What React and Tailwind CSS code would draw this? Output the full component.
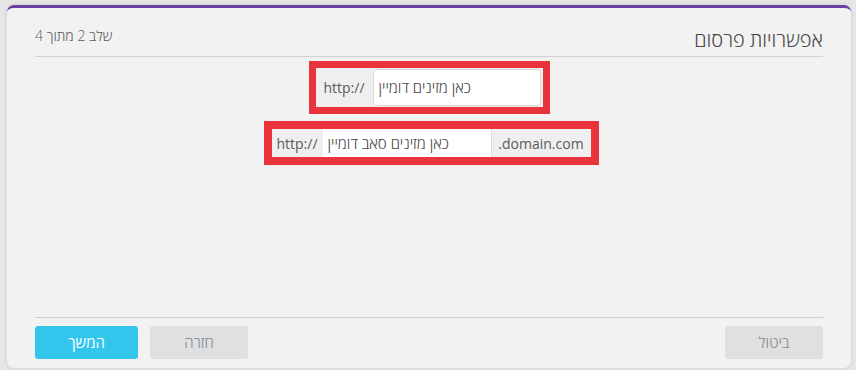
import React from "react";

export default function App() {
  return (
    <div
      dir="rtl"
      className="w-[856px] h-[370px] bg-[#e6e6e6] pt-[5px] pl-[7px] pr-[5px] pb-[2px] overflow-hidden"
      style={{ fontFamily: '"Open Sans", "Noto Sans", "Liberation Sans", sans-serif' }}
    >
      <div className="h-full flex flex-col rounded-[7px] bg-[#f2f2f2] border-t-[3px] border-[#6a3ea2] shadow-[0_0_4px_rgba(0,0,0,0.12)] px-[28px] pb-[9px]">
        {/* header */}
        <div className="flex items-start justify-between pt-[18px] pb-[2px] border-b border-[#d3d3d3]">
          <div className="text-[20px] leading-[28px] font-light text-[#4a4a4a]">אפשרויות פרסום</div>
          <div className="text-[14px] leading-[20px] font-light text-[#5a5a5a]">שלב 2 מתוך 4</div>
        </div>

        {/* body */}
        <div className="flex-1 flex flex-col items-center pt-[4px]">
          <div dir="ltr" className="flex items-center border-[7px] border-[#e8343a] bg-[#efefef] h-[53px] w-[241px]">
            <div className="w-[57px] text-center text-[14px] text-[#5a5a5a]">http://</div>
            <div className="w-[168px] h-[37px] bg-white border border-[#d9d9d9] rounded-[4px] flex items-center pl-[5px] text-[15px] font-light text-[#444444]">
              כאן מזינים דומיין
            </div>
          </div>
          <div dir="ltr" className="mt-[7px] ml-[4px] flex border-[8px] border-[#e8343a] bg-[#efefef] h-[44px] w-[335px]">
            <div className="w-[51px] flex items-center justify-center text-[14px] text-[#5a5a5a]">http://</div>
            <div className="w-[168px] bg-white flex items-center pl-[5px] text-[15px] font-light text-[#444444]">
              כאן מזינים סאב דומיין
            </div>
            <div className="flex-1 flex items-center justify-center border-l border-[#dddddd] text-[14px] text-[#5a5a5a]">
              .domain.com
            </div>
          </div>
        </div>

        {/* footer */}
        <div className="border-t border-[#cfcfcf] pt-[8px] flex items-center justify-between">
          <button className="w-[98px] h-[33px] rounded-[3px] bg-[#dee0e2] text-[15px] font-light text-[#888888]">ביטול</button>
          <div className="flex gap-[12px]">
            <button className="w-[98px] h-[33px] rounded-[3px] bg-[#dee0e2] text-[15px] font-light text-[#888888]">חזרה</button>
            <button className="w-[103px] h-[33px] rounded-[3px] bg-[#33c6ec] text-[15px] text-white">המשך</button>
          </div>
        </div>
      </div>
    </div>
  );
}
